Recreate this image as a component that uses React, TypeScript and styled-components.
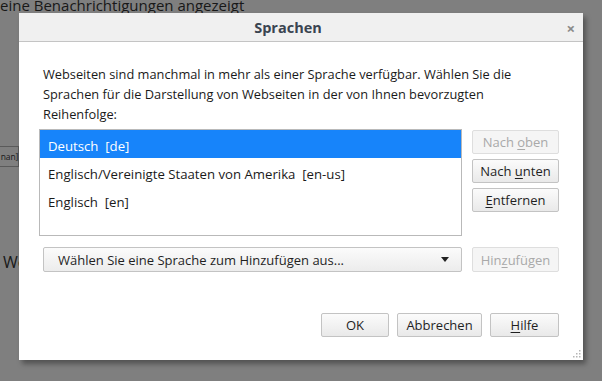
import styled, { createGlobalStyle } from "styled-components";

const GlobalStyle = createGlobalStyle`
  html, body {
    margin: 0;
    padding: 0;
    width: 602px;
    height: 381px;
    overflow: hidden;
    background: #7f7f7f;
    font-family: "Open Sans", "Noto Sans", sans-serif;
  }
`;

const Page = styled.div`
  position: relative;
  width: 602px;
  height: 381px;
  overflow: hidden;
  background: #7f7f7f;
`;

const PageText = styled.div`
  margin-top: -5px;
  font-size: 15px;
  color: #181818;
  line-height: 20px;
`;

const PageLangBox = styled.div`
  box-sizing: border-box;
  margin-top: 131px;
  width: 19px;
  height: 21px;
  border-top: 1px solid #5a5a5a;
  border-bottom: 1px solid #5a5a5a;
  border-right: 1px solid #5a5a5a;
  display: flex;
  justify-content: flex-end;
  align-items: center;
  font-size: 8.5px;
  letter-spacing: -0.2px;
  color: #181818;
`;

const PageHeading = styled.div`
  margin-top: 84px;
  margin-left: 3px;
  font-size: 16px;
  color: #181818;
`;

const Dialog = styled.div`
  position: absolute;
  left: 19px;
  top: 13px;
  width: 564px;
  height: 347px;
  background: #fff;
  box-shadow: 3px 4px 5px rgba(0, 0, 0, 0.35);
  display: flex;
  flex-direction: column;
`;

const TitleBar = styled.div`
  height: 28px;
  background: #f0f0f0;
  border-bottom: 1px solid #c4c4c4;
  display: flex;
  align-items: center;
  justify-content: center;
  position: relative;
`;

const Title = styled.span`
  font-size: 14.5px;
  font-weight: 700;
  color: #3a4450;
  margin-right: 26px;
`;

const Close = styled.span`
  position: absolute;
  right: 8px;
  top: 5px;
  font-size: 15px;
  font-weight: 700;
  color: #8a8a8a;
`;

const Body = styled.div`
  flex: 1;
  display: flex;
  flex-direction: column;
  padding: 22px 24px 23px 20px;
`;

const Intro = styled.p`
  margin: 0 0 5px 4px;
  font-size: 12.8px;
  line-height: 20px;
  color: #1a1a1a;
`;

const Grid = styled.div`
  display: grid;
  grid-template-columns: 1fr 87px;
  column-gap: 10px;
  row-gap: 11px;
`;

const List = styled.div`
  height: 105px;
  border: 1px solid #b9b9b9;
  display: flex;
  flex-direction: column;
`;

const Row = styled.div<{ $selected?: boolean }>`
  box-sizing: border-box;
  height: 28px;
  flex: none;
  padding: 3px 0 0 8px;
  display: flex;
  align-items: center;
  font-size: 13.2px;
  white-space: pre;
  background: ${({ $selected }) => ($selected ? "#1784fa" : "transparent")};
  color: ${({ $selected }) => ($selected ? "#fff" : "#1a1a1a")};
`;

const SideButtons = styled.div`
  display: flex;
  flex-direction: column;
  gap: 5px;
  padding-top: 1px;
`;

const Button = styled.button<{ $width?: number; $height?: number }>`
  box-sizing: border-box;
  height: ${({ $height }) => $height ?? 24}px;
  width: ${({ $width }) => ($width ? `${$width}px` : "100%")};
  padding: 0;
  font-family: inherit;
  font-size: 13px;
  color: #1f1f1f;
  background: linear-gradient(#fbfbfb, #e9e9e9);
  border: 1px solid #c3c3c3;
  border-radius: 2px;

  &:disabled {
    color: #a9a9a9;
    background: #f5f5f5;
    border-color: #dedede;
  }

  u {
    text-underline-offset: 2px;
  }
`;

const Select = styled.div`
  margin-left: 4px;
  height: 23px;
  border: 1px solid #c3c3c3;
  border-radius: 2px;
  background: linear-gradient(#fbfbfb, #ececec);
  display: flex;
  align-items: center;
  justify-content: space-between;
  padding: 0 12px 0 14px;
  font-size: 13px;
  color: #1f1f1f;
`;

const Arrow = styled.span`
  width: 0;
  height: 0;
  border-left: 4px solid transparent;
  border-right: 4px solid transparent;
  border-top: 5px solid #222;
`;

const Footer = styled.div`
  margin-top: auto;
  display: flex;
  justify-content: flex-end;
  gap: 8px;
`;

const Grip = styled.svg`
  position: absolute;
  right: 2px;
  bottom: 2px;
`;

export default function App() {
  return (
    <>
      <GlobalStyle />
      <Page>
        <PageText>eine Benachrichtigungen angezeigt</PageText>
        <PageLangBox>nan]</PageLangBox>
        <PageHeading>We</PageHeading>

        <Dialog>
          <TitleBar>
            <Title>Sprachen</Title>
            <Close>×</Close>
          </TitleBar>
          <Body>
            <Intro>
              Webseiten sind manchmal in mehr als einer Sprache verfügbar. Wählen Sie die
              <br />
              Sprachen für die Darstellung von Webseiten in der von Ihnen bevorzugten
              <br />
              Reihenfolge:
            </Intro>
            <Grid>
              <List>
                <Row $selected>{"Deutsch  [de]"}</Row>
                <Row>{"Englisch/Vereinigte Staaten von Amerika  [en-us]"}</Row>
                <Row>{"Englisch  [en]"}</Row>
              </List>
              <SideButtons>
                <Button disabled>
                  Nach <u>o</u>ben
                </Button>
                <Button>
                  Nach <u>u</u>nten
                </Button>
                <Button>
                  <u>E</u>ntfernen
                </Button>
              </SideButtons>
              <Select>
                <span>Wählen Sie eine Sprache zum Hinzufügen aus...</span>
                <Arrow />
              </Select>
              <Button disabled $height={25}>
                Hin<u>z</u>ufügen
              </Button>
            </Grid>
            <Footer>
              <Button $width={68}>OK</Button>
              <Button $width={85}>Abbrechen</Button>
              <Button $width={69}>
                <u>H</u>ilfe
              </Button>
            </Footer>
          </Body>
          <Grip width="10" height="10" viewBox="0 0 10 10">
            {[
              [8, 2],
              [8, 5],
              [5, 5],
              [8, 8],
              [5, 8],
              [2, 8],
            ].map(([x, y]) => (
              <rect key={`${x}-${y}`} x={x} y={y} width="1.5" height="1.5" fill="#b5b5b5" />
            ))}
          </Grip>
        </Dialog>
      </Page>
    </>
  );
}
